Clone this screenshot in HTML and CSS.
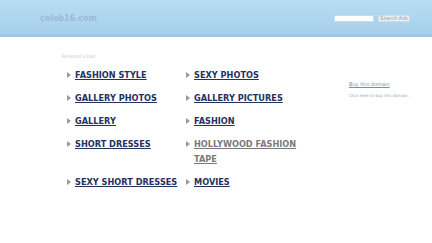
FILE: index.html
```html
<!DOCTYPE html>
<html lang="en">
<head>
    <meta charset="UTF-8">
    <meta name="viewport" content="width=device-width, initial-scale=1.0">
    <title>celeb16.com</title>
    <link rel="stylesheet" href="styles.css">
</head>
<body>
    <div class="header">
        <div class="domain">celeb16.com</div>
        <form class="search">
            <input type="text">
            <button type="button">Search Ads</button>
        </form>
    </div>

    <div class="main">
        <div class="links">
            <div class="title">Related Links</div>
            <ul>
                <li><a href="#">FASHION STYLE</a></li>
                <li><a href="#">SEXY PHOTOS</a></li>
                <li><a href="#">GALLERY PHOTOS</a></li>
                <li><a href="#">GALLERY PICTURES</a></li>
                <li><a href="#">GALLERY</a></li>
                <li><a href="#">FASHION</a></li>
                <li><a href="#">SHORT DRESSES</a></li>
                <li><a href="#" class="visited">HOLLYWOOD FASHION TAPE</a></li>
                <li><a href="#">SEXY SHORT DRESSES</a></li>
                <li><a href="#">MOVIES</a></li>
            </ul>
        </div>
        <div class="side">
            <a href="#" class="buy">Buy this domain</a>
            <div class="note">Click here to buy this domain.</div>
        </div>
    </div>
</body>
</html>
```

FILE: styles.css
```css
body {
    margin: 0;
    font-family: "DejaVu Sans", sans-serif;
    background-color: #fff;
}
.header {
    height: 34px;
    background: linear-gradient(#b7ddf3, #a8cfeb);
    border-bottom: 3px solid #9fc5e3;
    display: flex;
    align-items: center;
    justify-content: space-between;
    padding: 0 22px 0 40px;
}
.domain {
    font-size: 8px;
    font-weight: bold;
    color: #9db9d4;
    margin-top: 3px;
}
.search {
    display: flex;
    align-items: center;
    gap: 4px;
    margin-top: 2px;
}
.search input {
    width: 38px;
    height: 5px;
    padding: 0;
    border: 1px solid #c9dcea;
    background: #fff;
}
.search button {
    font-family: "DejaVu Sans", sans-serif;
    font-size: 5px;
    line-height: 5px;
    white-space: nowrap;
    color: #8a9aa8;
    background: #e8eef3;
    border: 1px solid #d0dbe4;
    padding: 0;
    height: 7px;
    width: 32px;
}
.main {
    display: flex;
    padding: 16px 0 0 62px;
}
.links {
    width: 287px;
}
.title {
    font-size: 5px;
    color: #c8cfd6;
    margin-bottom: 9px;
}
.links ul {
    list-style: none;
    margin: 0;
    padding: 0;
    display: grid;
    grid-template-columns: 119px 120px;
    row-gap: 8px;
}
.links li {
    padding-left: 13px;
    position: relative;
    font-size: 8.2px;
    line-height: 15px;
}
.links li::before {
    content: "";
    position: absolute;
    left: 5px;
    top: 4px;
    border-left: 4px solid #9a9a9a;
    border-top: 3.5px solid transparent;
    border-bottom: 3.5px solid transparent;
}
.links a {
    font-weight: bold;
    color: #243260;
}
.links a.visited {
    color: #7a7a7a;
}
.side {
    padding-top: 28px;
}
.buy {
    display: block;
    font-size: 5px;
    color: #6f8fc0;
    margin-bottom: 6px;
}
.note {
    font-size: 4px;
    color: #9aa5b0;
}
```
